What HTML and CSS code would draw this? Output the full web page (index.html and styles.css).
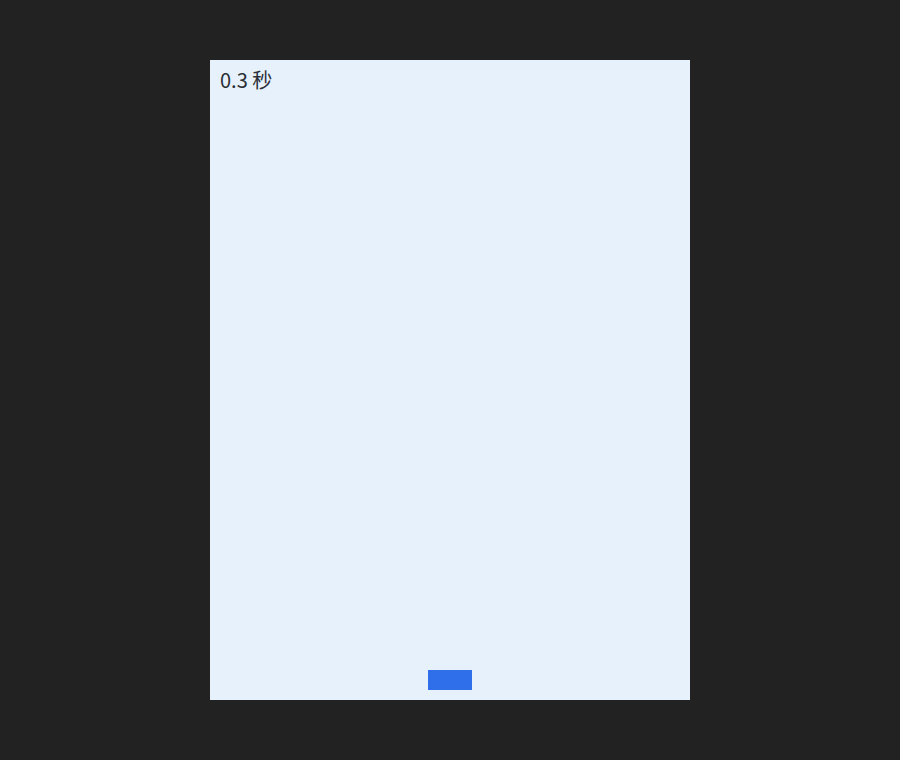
FILE: index.html
```html
<!DOCTYPE html>
<html lang="zh">
<head>
<meta charset="utf-8">
<link rel="stylesheet" href="styles.css">
</head>
<body>
<div class="panel">
  <div class="time">0.3 秒</div>
  <div class="bar"></div>
</div>
</body>
</html>
```
FILE: styles.css
```css
html, body {
  margin: 0;
  padding: 0;
  background: #222222;
}
body {
  height: 760px;
  display: flex;
  justify-content: center;
  align-items: flex-start;
}
.panel {
  margin-top: 60px;
  width: 480px;
  height: 640px;
  box-sizing: border-box;
  background: #e6f1fc;
  padding: 6px 10px 10px 10px;
  display: flex;
  flex-direction: column;
  align-items: flex-start;
  justify-content: space-between;
}
.time {
  font-family: "Noto Sans CJK SC", "Noto Sans", sans-serif;
  font-size: 20px;
  line-height: 28px;
  color: #2b2f36;
}
.bar {
  align-self: center;
  width: 44px;
  height: 20px;
  background: #2f6fea;
}
```
